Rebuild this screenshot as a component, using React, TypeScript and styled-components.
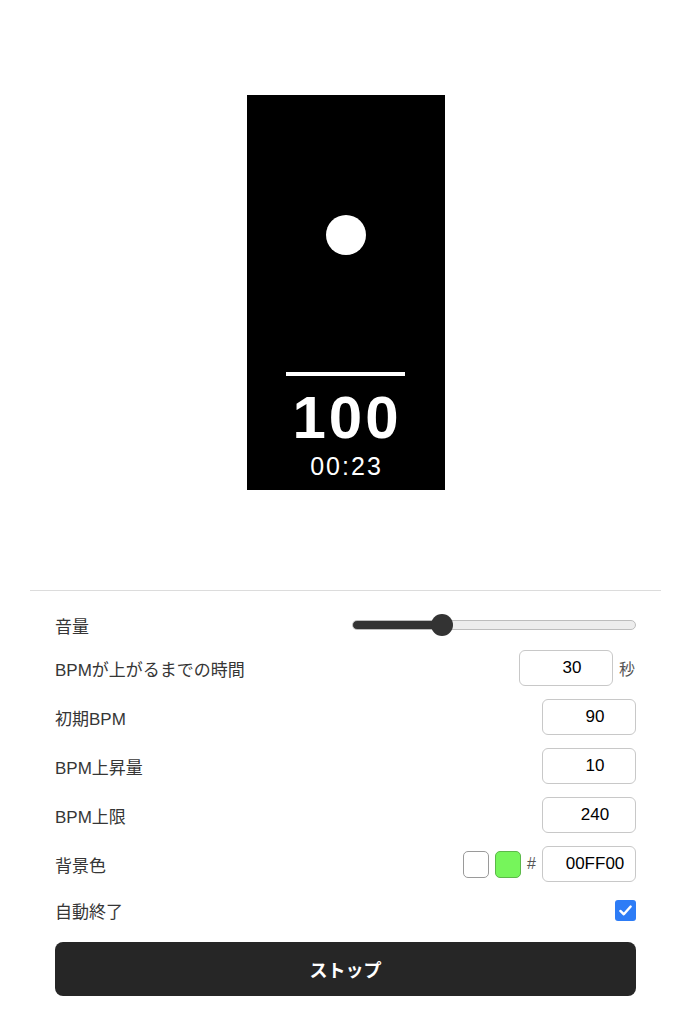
import { FC } from 'react';
import styled, { createGlobalStyle } from 'styled-components';

const GlobalStyle = createGlobalStyle`
    html, body {
        margin: 0;
        padding: 0;
        background: #fff;
    }
    body {
        font-family: "Liberation Sans", "Noto Sans CJK JP", sans-serif;
        color: #333;
    }
`

const Page = styled.div`
    width: 631px;
    margin-left: 30px;
    padding-top: 95px;
`

const Stage = styled.div`
    display: flex;
    justify-content: center;
    padding-bottom: 100px;
    border-bottom: 1px solid #dcdcdc;
`

const Screen = styled.div`
    width: 198px;
    height: 395px;
    background: #000;
    display: flex;
    flex-direction: column;
    align-items: center;
    padding-top: 120px;
    box-sizing: border-box;
`

const Dot = styled.div`
    width: 40px;
    height: 40px;
    border-radius: 50%;
    background: #fff;
`

const Bar = styled.div`
    width: 119px;
    height: 4px;
    background: #fff;
    margin-top: 117px;
`

const Bpm = styled.div`
    color: #fff;
    font-family: "Liberation Sans", sans-serif;
    font-weight: bold;
    font-size: 60px;
    line-height: 60px;
    letter-spacing: 3px;
    padding-left: 3px;
    margin-top: 12px;
`

const Timer = styled.div`
    color: #fff;
    font-family: "Liberation Sans", sans-serif;
    font-size: 25px;
    line-height: 28px;
    letter-spacing: 2px;
    padding-left: 2px;
    margin-top: 4px;
`

const Settings = styled.div`
    display: flex;
    flex-direction: column;
    gap: 13px;
    padding: 22px 25px 0;
`

const Row = styled.div<{ $h: number }>`
    display: flex;
    align-items: center;
    justify-content: space-between;
    height: ${p => p.$h}px;
`

const Label = styled.div`
    font-size: 17px;
    color: #363636;
`

const Controls = styled.div`
    display: flex;
    align-items: center;
    gap: 6px;
`

const Slider = styled.input`
    -webkit-appearance: none;
    appearance: none;
    width: 284px;
    height: 10px;
    margin: 0;
    border: 1px solid #bdbdbd;
    border-radius: 5px;
    box-sizing: border-box;
    outline: none;

    &::-webkit-slider-thumb {
        -webkit-appearance: none;
        width: 22px;
        height: 22px;
        border-radius: 50%;
        background: #333;
    }
`

const NumBox = styled.input`
    width: 94px;
    height: 36px;
    box-sizing: border-box;
    border: 1px solid #c8c8c8;
    border-radius: 6px;
    padding: 0 0 0 12px;
    font-family: "Liberation Sans", sans-serif;
    font-size: 17px;
    color: #000;
    text-align: center;
    outline: none;
`

const Unit = styled.span`
    font-size: 16px;
    color: #555;
    width: 17px;
`

const Swatch = styled.div<{ $color: string; $border: string }>`
    width: 26px;
    height: 27px;
    box-sizing: border-box;
    border-radius: 5px;
    background: ${p => p.$color};
    border: 1px solid ${p => p.$border};
`

const Hash = styled.span`
    font-size: 16px;
    color: #555;
`

const Check = styled.div`
    width: 21px;
    height: 21px;
    border-radius: 3px;
    background: #2d7cf6;
    display: flex;
    align-items: center;
    justify-content: center;
`

const StopButton = styled.button`
    margin-top: 4px;
    height: 54px;
    border: none;
    border-radius: 8px;
    background: #262626;
    color: #fff;
    font-family: "Noto Sans CJK JP", sans-serif;
    font-weight: bold;
    font-size: 18px;
`

const volume = 30

const App: FC = () => {
    const fill = (11 + (volume / 100) * 262) / 284 * 100
    return (
        <>
            <GlobalStyle />
            <Page>
                <Stage>
                    <Screen>
                        <Dot />
                        <Bar />
                        <Bpm>100</Bpm>
                        <Timer>00:23</Timer>
                    </Screen>
                </Stage>
                <Settings>
                    <Row $h={24}>
                        <Label>音量</Label>
                        <Slider
                            type="range"
                            min={0}
                            max={100}
                            defaultValue={volume}
                            style={{ background: `linear-gradient(to right, #333 0 ${fill}%, #ededed ${fill}% 100%)` }}
                        />
                    </Row>
                    <Row $h={36}>
                        <Label>BPMが上がるまでの時間</Label>
                        <Controls>
                            <NumBox defaultValue="30" />
                            <Unit>秒</Unit>
                        </Controls>
                    </Row>
                    <Row $h={36}>
                        <Label>初期BPM</Label>
                        <NumBox defaultValue="90" />
                    </Row>
                    <Row $h={36}>
                        <Label>BPM上昇量</Label>
                        <NumBox defaultValue="10" />
                    </Row>
                    <Row $h={36}>
                        <Label>BPM上限</Label>
                        <NumBox defaultValue="240" />
                    </Row>
                    <Row $h={36}>
                        <Label>背景色</Label>
                        <Controls>
                            <Swatch $color="#fff" $border="#9a9a9a" />
                            <Swatch $color="#76f55b" $border="#5cb84a" />
                            <Hash>#</Hash>
                            <NumBox defaultValue="00FF00" />
                        </Controls>
                    </Row>
                    <Row $h={30}>
                        <Label>自動終了</Label>
                        <Check>
                            <svg width="15" height="15" viewBox="0 0 16 16">
                                <path d="M2.5 8.5 L6.2 12 L13.5 3.8" fill="none" stroke="#fff" strokeWidth="2.6" strokeLinecap="round" strokeLinejoin="round" />
                            </svg>
                        </Check>
                    </Row>
                    <StopButton>ストップ</StopButton>
                </Settings>
            </Page>
        </>
    )
};

export default App;
